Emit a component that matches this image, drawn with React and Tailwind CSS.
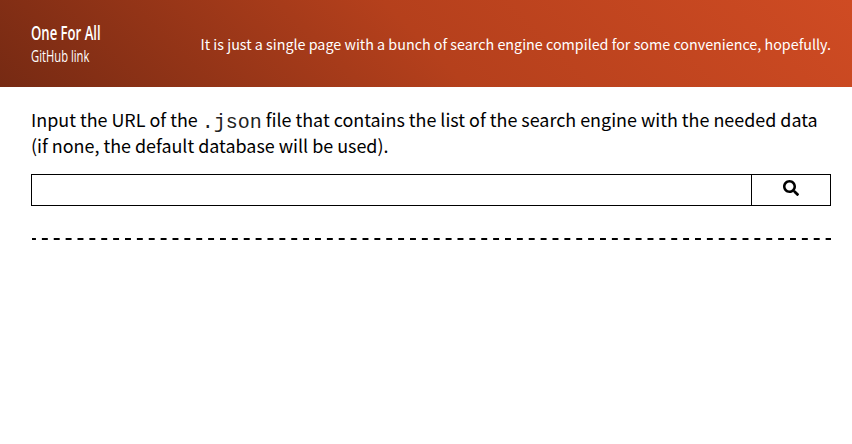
import { FaSearch } from "react-icons/fa";

export default function App() {
  return (
    <div className="min-h-screen bg-white font-['Noto_Sans_CJK_SC',sans-serif] text-black">
      <header className="flex h-[87px] items-center justify-between bg-[linear-gradient(45deg,#762a13,#b5401c_50%,#cf4b23)] pr-[21px] pl-[31px] text-white">
        <div className="w-[110px] whitespace-nowrap font-['Open_Sans',sans-serif]">
          <h1 className="origin-left scale-x-[0.69] pt-px text-[19px] leading-[23px] font-semibold">One For All</h1>
          <a className="block origin-left scale-x-[0.68] text-[16.5px] leading-[22px]" href="#">GitHub link</a>
        </div>
        <p className="text-[14.32px] leading-[24px] whitespace-nowrap">
          It is just a single page with a bunch of search engine compiled for some convenience, hopefully.
        </p>
      </header>
      <main className="pt-[19px] pr-[21px] pl-[31px]">
        <p className="text-[17.92px] leading-[26px] whitespace-nowrap">
          Input the URL of the <code className="relative top-px font-['Liberation_Mono',monospace] text-[20px] leading-none text-[#222]">.json</code> file that contains the list of the search engine with the needed data
          <br />
          (if none, the default database will be used).
        </p>
        <form className="mt-[16px] flex h-[32px] border border-black">
          <input aria-label="URL" className="min-w-0 flex-1 px-2 outline-none" />
          <button type="button" aria-label="Search" className="flex w-[79px] justify-center border-l border-black pt-[5px]">
            <FaSearch size={16} />
          </button>
        </form>
        <hr className="mt-[32px] ml-px h-[2px] border-0 bg-[linear-gradient(90deg,#000_50%,transparent_50%)] bg-[length:11.89px_2px] bg-[position:-2px_0]" />
      </main>
    </div>
  );
}
